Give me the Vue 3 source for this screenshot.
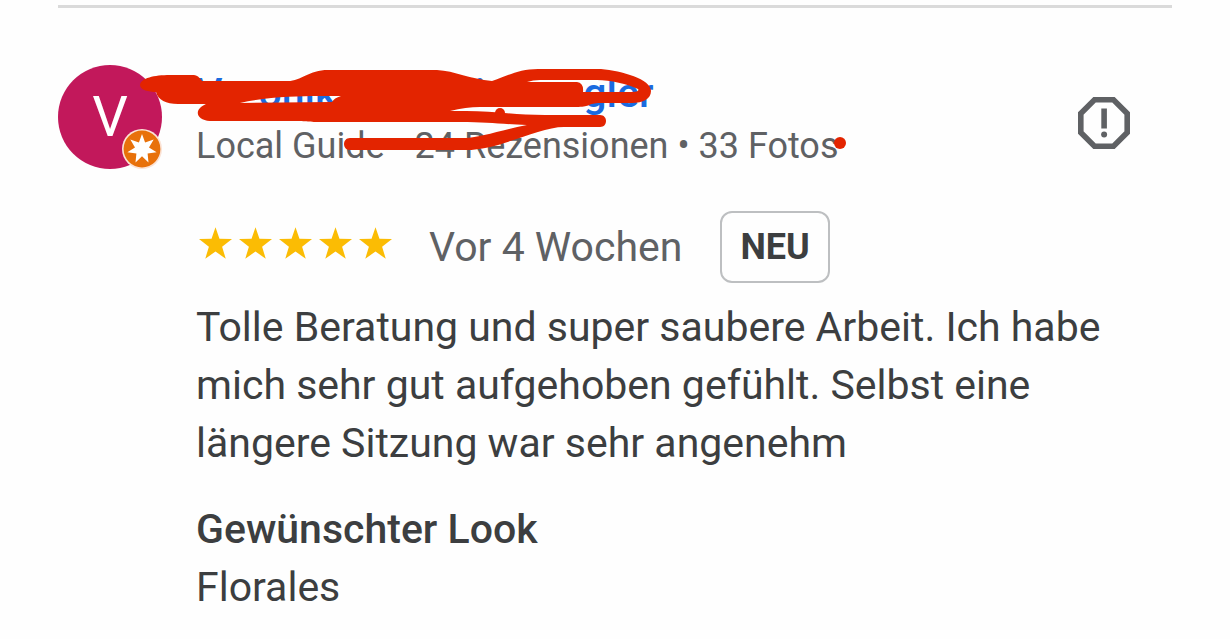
<script setup>
const stars = [1, 2, 3, 4, 5]
</script>

<template>
  <main class="page">
    <hr class="rule" />
    <article class="review">
      <header class="head">
        <div class="avatar" aria-hidden="true">
          <span>V</span>
          <svg class="badge" viewBox="0 0 40 40">
            <circle cx="20" cy="20" r="20" fill="#fbe3d6" />
            <circle cx="20" cy="20" r="18.4" fill="#e8710a" />
            <path fill="#fff" d="M20 5l3.1 8.5 8.6-2.9-4.7 7.8 7.6 4.9-9 1.2.9 9-6.5-6.3-6.5 6.3.9-9-9-1.2 7.6-4.9-4.7-7.8 8.6 2.9z" />
          </svg>
        </div>
        <div class="who">
          <a class="name" href="#"><span>V</span><span class="mid">onik</span><span class="inner">i</span><span class="stem">l</span><span class="last">gler</span></a>
          <p class="meta">Local Guide • 24 Rezensionen • 33 Fotos</p>
        </div>
        <button class="report" type="button" aria-label="Rezension melden">
          <svg viewBox="0 0 52 52">
            <path fill="none" stroke="#5f6164" stroke-width="5.6" d="M16.5 2.8h19L49.2 16.5v19L35.5 49.2h-19L2.8 35.5v-19z" />
            <path fill="#5f6164" d="M23.3 11.5h5.6v20h-5.6z" />
            <circle cx="26.1" cy="37.5" r="3" fill="#5f6164" />
          </svg>
        </button>
        <svg class="scribble" viewBox="58 65 800 100" aria-hidden="true">
          <path
            fill="#e32400"
            fill-rule="evenodd"
            d="M140 85C141 78 154 75 170 75H194Q198 75 202 81H288C301 81 309 70 328 70H437C455 71 470 79 492 81C505 77 518 69 538 69H601C622 71 651 79 651 91C651 99 643 103 632 103H598C587 104 590 107 576 107H480Q466 107 450 111H466C493 111 515 115 545 115H600C608 115 608 127 600 127H564C538 127 500 150 466 150H350C342 150 342 138 350 138H462C480 138 500 130 527 125C500 124 488 122 460 122H320C307 122 307 121 290 121H210C195 120 194 109 206 104H178C166 104 158 100 156 92C149 92 140 90 140 85ZM240 103C266 97 298 96 318 96H341Q334 98 332 102ZM527 82H577Q584 83 583 92H632Q640 92 638 89C628 84 610 80 597 80H540Q533 80 527 82Z"
          />
          <circle cx="500" cy="113" r="5" fill="#e32400" />
          <circle cx="840" cy="143" r="6" fill="#e32400" />
        </svg>
      </header>

      <div class="body">
        <div class="rating">
          <div class="stars" role="img" aria-label="5 Sterne">
            <svg v-for="s in stars" :key="s" viewBox="0 0 20 19">
              <path fill="#fbbc04" d="M10 0l2.4 6.9 7.6.2-6 4.6 2.2 7.3-6.2-4.3L3.8 19 6 11.7 0 7.1l7.6-.2z" />
            </svg>
          </div>
          <span class="when">Vor 4 Wochen</span>
          <span class="new">NEU</span>
        </div>
        <p class="text">Tolle Beratung und super saubere Arbeit. Ich habe<br />mich sehr gut aufgehoben gefühlt. Selbst eine<br />längere Sitzung war sehr angenehm</p>
        <h2 class="label">Gewünschter Look</h2>
        <p class="value">Florales</p>
      </div>
    </article>
  </main>
</template>

<style>
body {
  margin: 0;
  background: #fefefe;
}
</style>

<style scoped>
.page {
  padding: 5px 58px 24px;
  font-family: Roboto, "Liberation Sans", sans-serif;
  color: #3c3e40;
}
p,
h2 {
  margin: 0;
}
.rule {
  height: 3px;
  margin: 0;
  border: 0;
  background: #dadada;
}
.head {
  position: relative;
  display: flex;
  align-items: flex-start;
  gap: 34px;
  margin-top: 57px;
}
.avatar {
  position: relative;
  flex: none;
  display: grid;
  place-items: center;
  width: 104px;
  height: 104px;
  border-radius: 50%;
  background: #c2185b;
  color: #fff;
  font-size: 56px;
}
.badge {
  position: absolute;
  right: 0;
  bottom: 0;
  width: 40px;
  height: 40px;
}
.who {
  flex: 1;
  padding-top: 4px;
}
.name {
  display: flex;
  font-size: 41px;
  font-weight: 500;
  line-height: 48px;
  color: #1a6be0;
  text-decoration: none;
}
.mid {
  margin-left: 36px;
}
.inner {
  margin-left: 138px;
}
.stem {
  margin-left: 15px;
}
.last {
  margin-left: 73px;
}
.meta {
  margin-top: 5px;
  font-size: 36px;
  line-height: 48px;
  color: #5f6164;
  white-space: nowrap;
}
.report {
  flex: none;
  width: 52px;
  height: 52px;
  margin: 32px 42px 0 0;
  padding: 0;
  border: 0;
  background: none;
}
.report svg {
  display: block;
}
.scribble {
  position: absolute;
  left: 0;
  top: 0;
  width: 800px;
  height: 100px;
  pointer-events: none;
}
.body {
  padding: 41px 0 0 138px;
}
.rating {
  display: flex;
  align-items: center;
}
.stars {
  display: flex;
  gap: 7px;
  padding: 0 37px 8px 3px;
}
.stars svg {
  width: 33px;
  height: 32px;
}
.when {
  font-size: 41px;
  line-height: 48px;
  color: #5f6164;
}
.new {
  box-sizing: border-box;
  margin-left: 38px;
  padding: 0 18px;
  border: 2px solid #bdbfc1;
  border-radius: 12px;
  font-size: 36px;
  font-weight: 700;
  line-height: 68px;
}
.text {
  margin-top: 15px;
  font-size: 41px;
  line-height: 58px;
  white-space: nowrap;
}
.label {
  margin-top: 28px;
  font-size: 41px;
  font-weight: 500;
  line-height: 58px;
}
.value {
  font-size: 41px;
  line-height: 58px;
}
</style>
